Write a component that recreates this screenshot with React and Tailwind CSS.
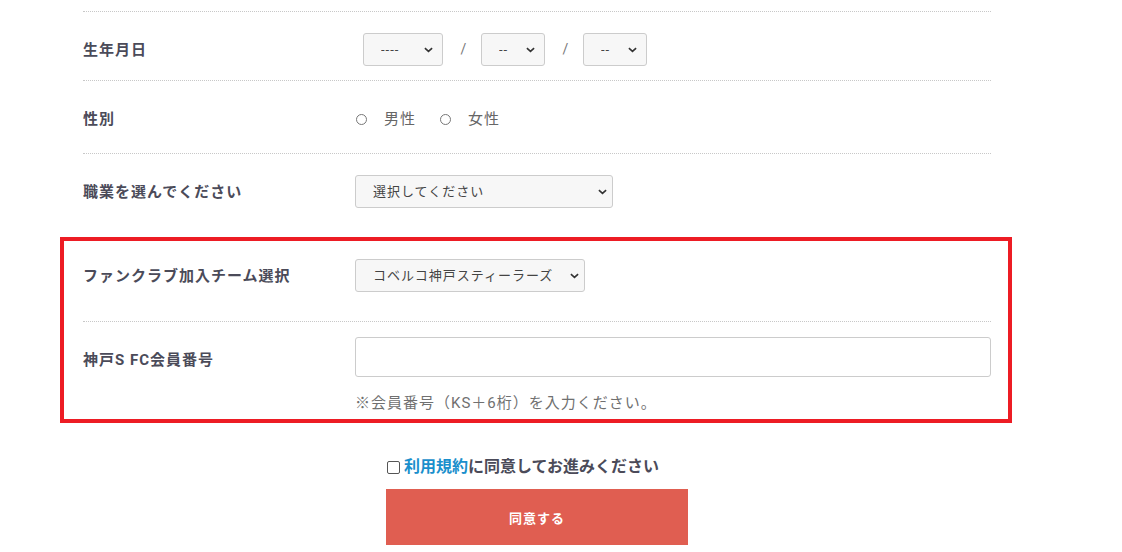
import { useState } from "react";

const LABEL = "w-[272px] shrink-0 text-[15px] font-bold leading-[20px] tracking-[1px] text-[#4b4b59]";

function Chevron({ className = "" }) {
  return (
    <svg
      viewBox="0 0 10 6"
      className={`pointer-events-none absolute top-1/2 h-[6px] w-[9px] -translate-y-1/2 ${className}`}
    >
      <path d="M1 1l4 3.5L9 1" fill="none" stroke="#333" strokeWidth="1.8" />
    </svg>
  );
}

function Select({ width, value, chevronRight = "right-[10px]" }) {
  return (
    <div className={`relative h-[33px] ${width}`}>
      <select
        defaultValue={value}
        className="h-full w-full appearance-none rounded-[3px] border border-[#cccccc] bg-[#f7f7f7] pl-[17px] text-[13px] tracking-[1px] text-[#444] outline-none"
      >
        <option>{value}</option>
      </select>
      <Chevron className={chevronRight} />
    </div>
  );
}

function Radio({ label }) {
  return (
    <label className="flex items-center">
      <span className="mr-[17px] h-[11px] w-[11px] rounded-full border border-[#777]" />
      <span className="text-[15px] leading-[20px] tracking-[1px] text-[#666]">{label}</span>
    </label>
  );
}

export default function App() {
  const [agree, setAgree] = useState(false);

  return (
    <div className="h-[552px] w-[1122px] overflow-hidden bg-white font-['Roboto','Noto_Sans_CJK_JP',sans-serif]">
      <div className="ml-[83px] w-[908px]">
        <div className="h-[12px] border-b border-dotted border-[#c8c8c8]" />

        {/* 生年月日 */}
        <div className="box-border flex h-[69px] items-center border-b border-dotted border-[#c8c8c8] pt-[21px] pb-[14px]">
          <div className={LABEL}>生年月日</div>
          <div className="ml-[8px] flex items-center">
            <Select width="w-[80px]" value="----" />
            <span className="w-[38px] pl-[3px] text-center text-[14px] text-[#777]">/</span>
            <Select width="w-[64px]" value="--" />
            <span className="w-[38px] pl-[3px] text-center text-[14px] text-[#777]">/</span>
            <Select width="w-[64px]" value="--" />
          </div>
        </div>

        {/* 性別 */}
        <div className="box-border flex h-[73px] items-center border-b border-dotted border-[#c8c8c8] pt-[28px] pb-[24px]">
          <div className={LABEL}>性別</div>
          <div className="flex items-center gap-[24px] pl-[1px]">
            <Radio label="男性" />
            <Radio label="女性" />
          </div>
        </div>

        {/* 職業 */}
        <div className="box-border flex h-[83px] items-start pt-[21px]">
          <div className={`${LABEL} mt-[7px]`}>職業を選んでください</div>
          <Select width="w-[258px]" value="選択してください" chevronRight="right-[6px]" />
        </div>
      </div>

      {/* highlighted section */}
      <div className="ml-[60px] box-border w-[952px] border-4 border-[#ed1c24] pl-[19px] pr-[17px]">
        <div className="box-border flex h-[81px] items-start border-b border-dotted border-[#c8c8c8] pt-[18px]">
          <div className={`${LABEL} mt-[7px]`}>ファンクラブ加入チーム選択</div>
          <Select width="w-[230px]" value="コベルコ神戸スティーラーズ" chevronRight="right-[6px]" />
        </div>

        <div className="flex items-start pt-[15px] pb-[6px]">
          <div className={`${LABEL} mt-[13px]`}>神戸S FC会員番号</div>
          <div className="flex-1">
            <input
              type="text"
              className="box-border h-[40px] w-full rounded-[3px] border border-[#cccccc] bg-white px-3 text-[14px] outline-none"
            />
            <p className="mt-[16px] text-[15px] leading-[20px] tracking-[1px] text-[#707070]">
              ※会員番号（KS＋6桁）を入力ください。
            </p>
          </div>
        </div>
      </div>

      {/* agreement */}
      <div className="ml-[83px] w-[908px]">
        <div className="mx-auto mt-[33px] flex w-[302px] flex-col">
          <label className="flex h-[22px] items-center text-[16px] font-bold leading-[22px] text-[#4b4b59]">
            <input
              type="checkbox"
              checked={agree}
              onChange={(e) => setAgree(e.target.checked)}
              className="ml-[1px] mr-[4px] h-[13px] w-[13px] appearance-none rounded-[2px] border border-[#555] bg-white"
            />
            <span className="text-[#1a8fcc]">利用規約</span>
            <span>に同意してお進みください</span>
          </label>
          <button className="mt-[11px] h-[56px] w-[302px] bg-[#e05e51] pt-[3px] text-[13px] font-bold tracking-[1px] text-white">
            同意する
          </button>
        </div>
      </div>
    </div>
  );
}
